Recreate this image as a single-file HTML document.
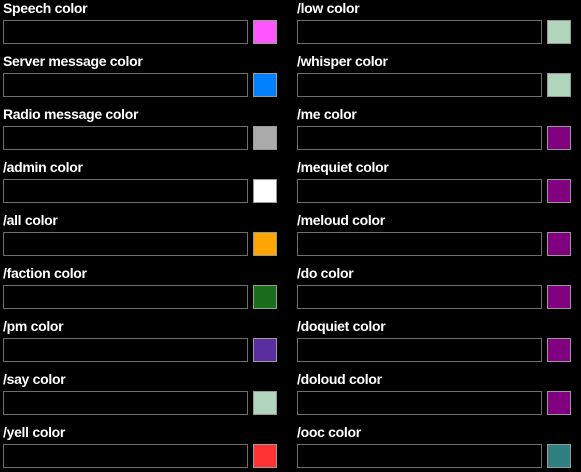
<!DOCTYPE html><html><head><style>
body{margin:0;width:581px;height:472px;background:#000;position:relative;overflow:hidden;font-family:"Liberation Sans",sans-serif;font-weight:bold;font-size:14px;color:#fff;letter-spacing:-0.3px}
.l{position:absolute;line-height:16px}
.i{position:absolute;width:243px;height:22px;border:1px solid #6e6e6e;box-sizing:content-box}
.s{position:absolute;width:22px;height:22px;border:1px solid #999}
</style></head><body>
<script>
var L=[["Speech color","#ff55ff"],["Server message color","#0080ff"],["Radio message color","#aaaaaa"],["/admin color","#ffffff"],["/all color","#ffa500"],["/faction color","#1a6e1a"],["/pm color","#5a2d9e"],["/say color","#b0d4bc"],["/yell color","#ff3333"]];
var R=[["/low color","#b0d4bc"],["/whisper color","#b0d4bc"],["/me color","#800080"],["/mequiet color","#800080"],["/meloud color","#800080"],["/do color","#800080"],["/doquiet color","#800080"],["/doloud color","#800080"],["/ooc color","#2e8080"]];
var h="";
function col(a,x,ix,sx){a.forEach(function(r,k){var y=k*53;h+='<div class="l" style="left:'+x+'px;top:'+(y)+'px">'+r[0]+'</div><div class="i" style="left:'+ix+'px;top:'+(y+20)+'px"></div><div class="s" style="left:'+sx+'px;top:'+(y+20)+'px;background:'+r[1]+'"></div>';});}
col(L,3,3,253);col(R,297,297,547);
document.write(h);
</script>
</body></html>
